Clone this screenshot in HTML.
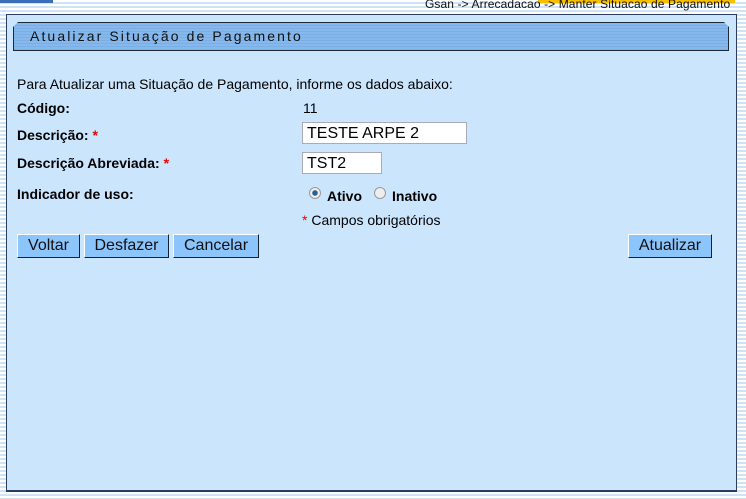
<!DOCTYPE html>
<html><head><meta charset="utf-8"><style>
body{margin:0;width:746px;height:499px;overflow:hidden;font-family:"Liberation Sans",Arial,sans-serif;
background:repeating-linear-gradient(to bottom,#fff 0,#fff 2px,#cfe3f6 2px,#cfe3f6 4px);position:relative}
.a{position:absolute}
#panel{left:6px;top:14px;width:729px;height:475px;background:#cbe5fd;border:1px solid #2b3d5c;border-width:1px 1px 2px 1px}
#hdr{left:13px;top:22px;width:714px;height:27px;border:1px solid #1e2a3a;
background:repeating-linear-gradient(to bottom,#86b8ec 0,#86b8ec 2px,#7aaee6 2px,#7aaee6 3px);
clip-path:polygon(5px 0,calc(100% - 5px) 0,100% 5px,100% 100%,0 100%,0 5px)}
#hdrt{left:30px;top:28px;font-size:14px;letter-spacing:2.1px;color:#111}
.t{font-size:14px;color:#000}
.b{font-weight:bold}
.r{color:#e00}
.in{background:#fff;border:1px solid #aab;font-size:16px;height:22px;line-height:22px;padding-left:4px;box-sizing:border-box}
.btn{background:#8cc4fc;border:1px solid #fff;border-right-color:#123;border-bottom-color:#123;font-size:16px;height:24px;line-height:22px;text-align:center;box-sizing:border-box;color:#111}
.rad{width:10px;height:10px;border-radius:50%;border:1px solid #999;background:#eee}
</style></head><body>
<div class="a" style="left:0;top:0;width:53px;height:3px;background:#3a6fb8"></div>
<div class="a" style="left:538px;top:0;width:197px;height:3px;background:#f6c000"></div>
<div class="a" style="left:425px;top:-3px;font-size:12px;color:#111;letter-spacing:0.1px">Gsan -&gt; Arrecadacao -&gt; Manter Situacao de Pagamento</div>
<div class="a" id="panel"></div>
<div class="a" id="hdr"></div>
<div class="a" id="hdrt">Atualizar Situação de Pagamento</div>
<div class="a t" style="left:17px;top:76px">Para Atualizar uma Situação de Pagamento, informe os dados abaixo:</div>
<div class="a t b" style="left:17px;top:100px">Código:</div>
<div class="a t" style="left:303px;top:100px">11</div>
<div class="a t b" style="left:17px;top:127px">Descrição: <span class="r">*</span></div>
<div class="a in" style="left:302px;top:122px;width:165px">TESTE ARPE 2</div>
<div class="a t b" style="left:17px;top:155px">Descrição Abreviada: <span class="r">*</span></div>
<div class="a in" style="left:302px;top:152px;width:80px">TST2</div>
<div class="a t b" style="left:17px;top:186px">Indicador de uso:</div>
<div class="a rad" style="left:309px;top:187px;background:radial-gradient(circle,#2b5f8e 0,#2b5f8e 2.5px,#eee 3px)"></div>
<div class="a t b" style="left:327px;top:188px">Ativo</div>
<div class="a rad" style="left:374px;top:187px"></div>
<div class="a t b" style="left:392px;top:188px">Inativo</div>
<div class="a t" style="left:302px;top:212px"><span class="r">*</span> Campos obrigatórios</div>
<div class="a btn" style="left:17px;top:234px;width:63px">Voltar</div>
<div class="a btn" style="left:84px;top:234px;width:85px">Desfazer</div>
<div class="a btn" style="left:173px;top:234px;width:86px">Cancelar</div>
<div class="a btn" style="left:628px;top:234px;width:84px">Atualizar</div>
</body></html>
